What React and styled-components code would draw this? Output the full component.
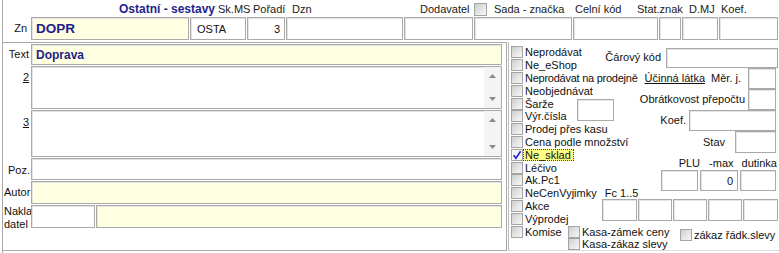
import React from "react";
import styled, { createGlobalStyle, css } from "styled-components";

const NAVY = "#1e1e8c";

const GlobalStyle = createGlobalStyle`
  html, body {
    margin: 0;
    padding: 0;
    background: #fff;
  }
  body {
    font-family: "Liberation Sans", Arial, sans-serif;
    font-size: 11px;
    color: #111;
  }
  * {
    box-sizing: border-box;
  }
`;

const Frame = styled.div`
  width: 777px;
  height: 253px;
  margin-left: 2px;
  border-left: 1px solid #a9a9a9;
  overflow: hidden;
`;

/* ---------- header labels ---------- */

const Header = styled.div`
  display: flex;
  align-items: flex-end;
  height: 17px;
  padding-left: 116px;
  white-space: nowrap;
`;

const HeadCell = styled.div`
  flex: 0 0 ${(p) => p.$w}px;
  min-width: 0;
  display: flex;
  align-items: center;
  height: 15px;
  padding-bottom: 1px;
  font-weight: ${(p) => (p.$bold ? 700 : 400)};
  font-size: ${(p) => (p.$bold ? "12px" : "11px")};
  color: ${(p) => (p.$bold ? NAVY : "#1a1a1a")};
`;

/* ---------- top field row ---------- */

const FieldRow = styled.div`
  display: flex;
  gap: 1px;
  height: 23px;
`;

const RowLabel = styled.div`
  flex: 0 0 27px;
  text-align: right;
  padding-right: 3px;
  line-height: 23px;
`;

const Field = styled.div`
  flex: 0 0 ${(p) => p.$w}px;
  width: ${(p) => p.$w}px;
  min-width: 0;
  height: ${(p) => (p.$h ? `${p.$h}px` : "100%")};
  display: flex;
  align-items: center;
  justify-content: ${(p) => (p.$right ? "flex-end" : "flex-start")};
  padding: 0 4px;
  background: ${(p) => (p.$yellow ? "#ffffe1" : "#fff")};
  border: 1px solid #a9a9a9;
  box-shadow: inset 1px 1px 0 #e4e4e4;
  white-space: nowrap;
  overflow: hidden;
`;

const Code = styled.span`
  color: ${NAVY};
  font-weight: 700;
  font-size: ${(p) => p.$size || 12}px;
`;

/* ---------- body ---------- */

const Body = styled.div`
  display: flex;
  margin-top: 2px;
  height: 209px;
`;

const LeftPane = styled.div`
  flex: 0 0 504px;
  display: grid;
  grid-template-columns: 28px 471px;
  grid-template-rows: 21px 43px 47px 22px 23px 23px;
  row-gap: 1px;
  align-content: start;
  padding-top: 1px;
  border-top: 1px solid #a9a9a9;
  border-right: 1px solid #a9a9a9;
  border-bottom: 1px solid #a9a9a9;
`;

const SideLabel = styled.div`
  padding-top: ${(p) => p.$pt || 0}px;
  padding-right: ${(p) => (p.$left ? 0 : p.$pr ?? 2)}px;
  padding-left: ${(p) => (p.$left ? 1 : 0)}px;
  text-align: ${(p) => (p.$left ? "left" : "right")};
  line-height: ${(p) => p.$lh || 20}px;
  white-space: nowrap;
  text-decoration: ${(p) => (p.$u ? "underline" : "none")};
`;

const Wide = styled(Field)`
  flex: none;
  width: auto;
  height: auto;
  padding: ${(p) => (p.$memo ? 0 : "0 4px")};
  justify-content: ${(p) => (p.$memo ? "flex-end" : "flex-start")};
  align-items: ${(p) => (p.$memo ? "stretch" : "center")};
`;

const SplitCell = styled.div`
  display: flex;
  gap: 1px;
`;

const ScrollTrack = styled.div`
  width: 17px;
  background: #f4f4f4;
  display: flex;
  flex-direction: column;
  justify-content: space-between;
  align-items: center;
  padding: 7px 0 7px;
`;

const Arrow = ({ down }) => (
  <svg width="7" height="4" viewBox="0 0 7 4">
    <path d={down ? "M0 0 L7 0 L3.5 4 Z" : "M0 4 L7 4 L3.5 0 Z"} fill="#8a8a8a" />
  </svg>
);

const Memo = () => (
  <Wide $memo>
    <ScrollTrack>
      <Arrow />
      <Arrow down />
    </ScrollTrack>
  </Wide>
);

/* ---------- right panel ---------- */

const RightPane = styled.div`
  flex: 1;
  min-width: 0;
  margin-left: 1px;
  padding: 4px 0 0 2px;
  border-left: 1px solid #b8b8b8;
  border-bottom: 1px solid #dcdcdc;
  display: flex;
  flex-direction: column;
`;

const Upper = styled.div`
  display: flex;
`;

const CheckCol = styled.div`
  flex: 0 0 89px;
  width: 89px;
  min-width: 0;
  display: flex;
  flex-direction: column;
`;

const CheckRow = styled.div`
  display: flex;
  align-items: center;
  height: 12.8px;
  white-space: nowrap;
`;

const CheckPair = styled.div`
  display: flex;
  align-items: center;
`;

const PairStack = styled.div`
  flex: 0 0 66px;
  min-width: 0;
  display: flex;
  flex-direction: column;
`;

const Box = styled.span`
  flex: 0 0 12px;
  width: 12px;
  height: 12px;
  display: inline-flex;
  align-items: center;
  justify-content: center;
  border: 1px solid #a4a4a4;
  background: ${(p) =>
    p.$checked
      ? "#f6f6f6"
      : "linear-gradient(135deg, #cdcdcd 0%, #e4e4e4 50%, #f7f7f7 100%)"};
`;

const HeadBox = styled(Box)`
  flex-basis: 13px;
  width: 13px;
  height: 13px;
`;

const CheckLabel = styled.span`
  margin-left: 2px;
  line-height: 12px;
  color: #111;
  letter-spacing: ${(p) => (p.$tight ? "-0.25px" : "normal")};
  ${(p) =>
    p.$focus &&
    css`
      margin-left: 0;
      padding: 0 2px 0 1px;
      background: #ffff86;
      border: 1px dotted #444;
      line-height: 10px;
      height: 12px;
    `}
`;

const Extra = styled.span`
  margin-left: ${(p) => p.$ml}px;
`;

const Check = ({ checked }) => (
  <Box $checked={checked}>
    {checked && (
      <svg width="10" height="10" viewBox="0 0 10 10">
        <path
          d="M1.6 5.2 L3.9 8.2 L8.6 1.2"
          fill="none"
          stroke="#2a2ac6"
          strokeWidth="1.7"
        />
      </svg>
    )}
  </Box>
);

const CheckItem = ({ label, checked, focus, tight, children }) => (
  <CheckRow>
    <Check checked={checked} />
    <CheckLabel $focus={focus} $tight={tight}>
      {label}
    </CheckLabel>
    {children}
  </CheckRow>
);

const FormCol = styled.div`
  flex: 0 0 178px;
  width: 178px;
  min-width: 0;
  display: flex;
  flex-direction: column;
  padding-top: 1px;
`;

const FormLine = styled.div`
  display: flex;
  align-items: ${(p) => p.$align || "center"};
  justify-content: ${(p) => p.$justify || "flex-end"};
  height: ${(p) => p.$h}px;
  gap: ${(p) => p.$gap || 0}px;
  padding-right: ${(p) => p.$pr || 0}px;
  padding-left: ${(p) => p.$pl || 0}px;
  margin-top: ${(p) => p.$mt || 0}px;
  white-space: nowrap;
`;

const FormText = styled.span`
  flex: none;
  margin-right: ${(p) => p.$mr || 0}px;
  line-height: 13px;
  text-decoration: ${(p) => (p.$u ? "underline" : "none")};
  color: #111;
`;

const Bottom = styled.div`
  display: flex;
  align-items: flex-start;
`;

const BottomSlot = styled.div`
  flex: 0 0 ${(p) => p.$w}px;
  min-width: 0;
  display: flex;
  flex-direction: column;
  margin-top: ${(p) => p.$mt || 0}px;
`;

export default function App() {
  return (
    <>
      <GlobalStyle />
      <Frame>
        <Header>
          <HeadCell $w={99} $bold>
            Ostatní - sestavy
          </HeadCell>
          <HeadCell $w={35}>Sk.MS</HeadCell>
          <HeadCell $w={39}>Pořadí</HeadCell>
          <HeadCell $w={128}>Dzn</HeadCell>
          <HeadCell $w={54}>Dodavatel</HeadCell>
          <HeadCell $w={20}>
            <HeadBox />
          </HeadCell>
          <HeadCell $w={81}>Sada - značka</HeadCell>
          <HeadCell $w={62}>Celní kód</HeadCell>
          <HeadCell $w={52}>Stat.znak</HeadCell>
          <HeadCell $w={32}>D.MJ</HeadCell>
          <HeadCell $w={40}>Koef.</HeadCell>
        </Header>

        <FieldRow>
          <RowLabel>Zn</RowLabel>
          <Field $w={158} $yellow>
            <Code $size={13.5}>DOPR</Code>
          </Field>
          <Field $w={56} style={{ paddingLeft: 6 }}>
            OSTA
          </Field>
          <Field $w={38} $right>
            3
          </Field>
          <Field $w={117} />
          <Field $w={69} />
          <Field $w={98} />
          <Field $w={85} />
          <Field $w={22} />
          <Field $w={36} />
          <Field $w={59} />
        </FieldRow>

        <Body>
          <LeftPane>
            <SideLabel>Text</SideLabel>
            <Wide $yellow>
              <Code>Doprava</Code>
            </Wide>

            <SideLabel $pt={1} $lh={18}>
              <SideLabel as="span" $u $pr={0}>
                2
              </SideLabel>
            </SideLabel>
            <Memo />

            <SideLabel $pt={2} $lh={18}>
              <SideLabel as="span" $u $pr={0}>
                3
              </SideLabel>
            </SideLabel>
            <Memo />

            <SideLabel $pr={1} $lh={24}>
              Poz.
            </SideLabel>
            <Wide />

            <SideLabel $left $lh={23}>
              Autor
            </SideLabel>
            <Wide $yellow />

            <SideLabel $left $lh={13}>
              Nakla
              <br />
              datel
            </SideLabel>
            <SplitCell>
              <Wide style={{ width: 64 }} />
              <Wide $yellow style={{ flex: 1 }} />
            </SplitCell>
          </LeftPane>

          <RightPane>
            <Upper>
              <CheckCol>
                <CheckItem label="Neprodávat" />
                <CheckItem label="Ne_eShop" />
                <CheckItem label="Neprodávat na prodejně" tight />
                <CheckItem label="Neobjednávat" />
                <CheckPair>
                  <PairStack>
                    <CheckItem label="Šarže" />
                    <CheckItem label="Výr.čísla" />
                  </PairStack>
                  <Field $w={37} $h={22} />
                </CheckPair>
                <CheckItem label="Prodej přes kasu" />
                <CheckItem label="Cena podle množství" />
                <CheckItem label="Ne_sklad" checked focus />
                <CheckItem label="Léčivo" />
                <CheckItem label="Ak.Pc1" />
                <CheckItem label="NeCenVyjimky">
                  <Extra $ml={8}>Fc 1..5</Extra>
                </CheckItem>
                <CheckItem label="Akce" />
                <CheckItem label="Výprodej" />
              </CheckCol>

              <FormCol>
                <FormLine $h={21} $gap={5}>
                  <FormText>Čárový kód</FormText>
                  <Field $w={112} $h={20} />
                </FormLine>
                <FormLine $h={21} $pr={2}>
                  <FormText $u $mr={6}>
                    Účinná látka
                  </FormText>
                  <FormText $mr={7}>Měr. j.</FormText>
                  <Field $w={28} $h={21} />
                </FormLine>
                <FormLine $h={21} $pr={2} $gap={3}>
                  <FormText>Obrátkovost přepočtu</FormText>
                  <Field $w={28} $h={21} />
                </FormLine>
                <FormLine $h={21} $pr={2} $gap={3}>
                  <FormText>Koef.</FormText>
                  <Field $w={87} $h={21} />
                </FormLine>
                <FormLine $h={22} $pr={2} $gap={10}>
                  <FormText>Stav</FormText>
                  <Field $w={41} $h={22} />
                </FormLine>
                <FormLine $h={17} $pr={1} $align="flex-end">
                  <FormText $mr={9}>PLU</FormText>
                  <FormText $mr={8}>-max</FormText>
                  <FormText>dutinka</FormText>
                </FormLine>
                <FormLine $h={21} $pr={2} $gap={2}>
                  <Field $w={37} $h={21} />
                  <Field $w={38} $h={21} $right>
                    0
                  </Field>
                  <Field $w={36} $h={21} />
                </FormLine>
                <FormLine $h={22} $mt={8} $gap={1} $justify="flex-start" $pl={2}>
                  <Field $w={35} $h={22} />
                  <Field $w={34} $h={22} />
                  <Field $w={34} $h={22} />
                  <Field $w={34} $h={22} />
                  <Field $w={35} $h={22} />
                </FormLine>
              </FormCol>
            </Upper>

            <Bottom>
              <BottomSlot $w={57}>
                <CheckItem label="Komise" />
              </BottomSlot>
              <BottomSlot $w={112}>
                <CheckItem label="Kasa-zámek ceny" />
                <CheckItem label="Kasa-zákaz slevy" />
              </BottomSlot>
              <BottomSlot $w={90} $mt={3}>
                <CheckItem label="zákaz řádk.slevy" />
              </BottomSlot>
            </Bottom>
          </RightPane>
        </Body>
      </Frame>
    </>
  );
}
